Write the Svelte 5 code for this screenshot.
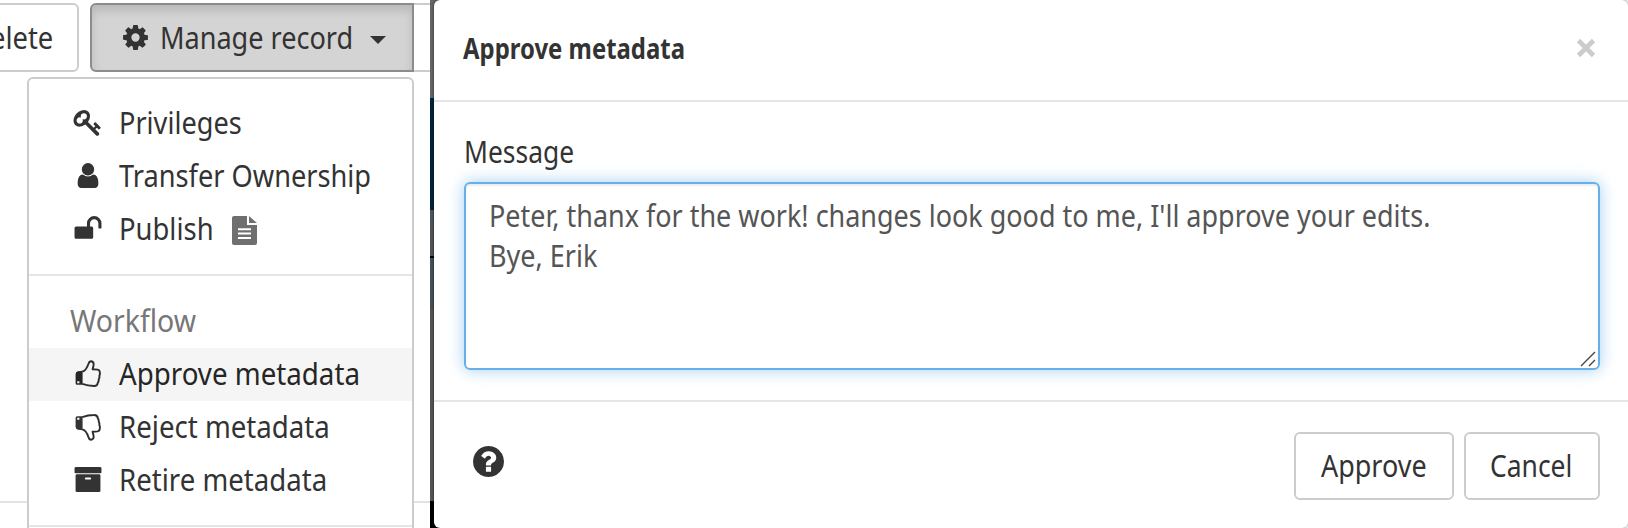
<script>
  const icons = {
    cog: ['0 0 1792 1792', 'M1152 896q0-106-75-181t-181-75-181 75-75 181 75 181 181 75 181-75 75-181zm512-109v222q0 12-8 23t-20 13l-185 28q-19 54-39 91 35 50 107 138 10 12 10 25t-9 23q-27 37-99 108t-94 71q-12 0-26-9l-138-108q-44 23-91 38-16 136-29 186-7 28-36 28h-222q-14 0-24.5-8.5t-11.5-21.5l-28-184q-49-16-90-37l-141 107q-10 9-25 9-14 0-25-11-126-114-165-168-7-10-7-23 0-12 8-23 15-21 51-66.5t54-70.5q-27-50-41-99l-183-27q-13-2-21-12.5t-8-23.5v-222q0-12 8-23t19-13l186-28q14-46 39-92-40-57-107-138-10-12-10-24 0-10 9-23 26-36 98.5-107.5t94.5-71.5q13 0 26 10l138 107q44-23 91-38 16-136 29-186 7-28 36-28h222q14 0 24.5 8.5t11.5 21.5l28 184q49 16 90 37l142-107q9-9 24-9 13 0 25 10 129 119 165 170 7 8 7 22 0 12-8 23-15 21-51 66.5t-54 70.5q26 50 41 98l183 28q13 2 21 12.5t8 23.5z'],
    key: ['0 0 1792 1792', 'M832 512q0-80-56-136t-136-56-136 56-56 136q0 42 19 83-41-19-83-19-80 0-136 56t-56 136 56 136 136 56 136-56 56-136q0-42-19-83 41 19 83 19 80 0 136-56t56-136zm851 704q0 17-49 66t-66 49q-9 0-28.5-16t-36.5-33-38.5-40-24.5-26l-96 96 220 220q28 28 28 68 0 42-39 81t-81 39q-40 0-68-28l-671-671q-176 131-365 131-163 0-265.5-102.5t-102.5-265.5q0-160 95-313t248-248 313-95q163 0 265.5 102.5t102.5 265.5q0 189-131 365l355 355 96-96q-3-3-26-24.5t-40-38.5-33-36.5-16-28.5q0-17 49-66t66-49q13 0 23 10 6 6 46 44.5t82 79.5 86.5 86 73 78 28.5 41z'],
    user: ['0 0 1792 1792', 'M1536 1399q0 109-62.5 187t-150.5 78h-854q-88 0-150.5-78t-62.5-187q0-85 8.5-160.5t31.5-152 58.5-131 94-89 134.5-34.5q131 128 313 128t313-128q76 0 134.5 34.5t94 89 58.5 131 31.5 152 8.5 160.5zm-256-887q0 159-112.5 271.5t-271.5 112.5-271.5-112.5-112.5-271.5 112.5-271.5 271.5-112.5 271.5 112.5 112.5 271.5z'],
    unlock: ['0 0 1792 1792', 'M1728 576v256q0 26-19 45t-45 19h-64q-26 0-45-19t-19-45v-256q0-106-75-181t-181-75-181 75-75 181v192h96q40 0 68 28t28 68v576q0 40-28 68t-68 28h-960q-40 0-68-28t-28-68v-576q0-40 28-68t68-28h672v-192q0-185 131.5-316.5t316.5-131.5 316.5 131.5 131.5 316.5z'],
    archive: ['0 0 1792 1792', 'M1088 832q0-26-19-45t-45-19h-256q-26 0-45 19t-19 45 19 45 45 19h256q26 0 45-19t19-45zm576-192v960q0 26-19 45t-45 19h-1408q-26 0-45-19t-19-45v-960q0-26 19-45t45-19h1408q26 0 45 19t19 45zm64-448v256q0 26-19 45t-45 19h-1536q-26 0-45-19t-19-45v-256q0-26 19-45t45-19h1536q26 0 45 19t19 45z'],
    help: ['128 128 1536 1536', 'M1024 1376v-192q0-14-9-23t-23-9h-192q-14 0-23 9t-9 23v192q0 14 9 23t23 9h192q14 0 23-9t9-23zm256-672q0-88-55.5-163t-138.5-116-170-41q-243 0-371 213-15 24 8 42l132 100q7 6 19 6 16 0 25-12 53-68 86-92 34-24 86-24 48 0 85.5 26t37.5 59q0 38-20 61t-68 45q-63 28-115.5 86.5t-52.5 125.5v36q0 14 9 23t23 9h192q14 0 23-9t9-23q0-19 21.5-49.5t54.5-49.5q32-18 49-28.5t46-35 44.5-48 28-60.5 12.5-81zm384 192q0 209-103 385.5t-279.5 279.5-385.5 103-385.5-103-279.5-279.5-103-385.5 103-385.5 279.5-279.5 385.5-103 385.5 103 279.5 279.5 103 385.5z'],
    file: ['0 0 25 29', 'M2 0H15V9H25V27Q25 29 23 29H2Q0 29 0 27V2Q0 0 2 0ZM17 0L25 7H17ZM6 12.2V14.2H19V12.2ZM6 16.5V18.5H19V16.5ZM6 20.9V22.9H19V20.9Z']
  };

  const record = [
    { label: 'Privileges', width: 123, icon: 'key' },
    { label: 'Transfer Ownership', width: 252, icon: 'user' },
    { label: 'Publish', width: 95, icon: 'unlock', badge: true }
  ];
  const workflow = [
    { label: 'Approve metadata', width: 241, thumb: 'up', active: true },
    { label: 'Reject metadata', width: 211, thumb: 'down' },
    { label: 'Retire metadata', width: 208, icon: 'archive' }
  ];

  // Condenses a label horizontally so that it fills the given width.
  function fit(node, width) {
    node.style.transform = `scaleX(${width / node.offsetWidth})`;
  }
</script>

{#snippet icon(name, cls)}
  <svg class={cls} viewBox={icons[name][0]} aria-hidden="true"><path fill-rule="evenodd" d={icons[name][1]} /></svg>
{/snippet}

{#snippet text(label, width)}
  <span class="text" style:width="{width}px"><span use:fit={width}>{label}</span></span>
{/snippet}

{#snippet row(item)}
  <li class="row" class:active={item.active}>
    {#if item.thumb}
      <svg class="thumb {item.thumb}" viewBox="0 0 27 27" aria-hidden="true">
        <path fill-rule="evenodd" d="M3 11.3L7.6 10.8V24.8H2.2Q.6 24.8 .6 23.2V14Q.8 11.6 3 11.3ZM2.2 21.2V23.2H4.4V21.2Z" />
        <path class="hand" d="M7.3 11.6C11 11 12.2 7.6 13.5 3.8Q14.3 1.2 16.3 1.3Q19 1.8 18.6 5L17.6 9.3L22.6 9.6Q25.1 10.2 24.7 12.4Q25.4 14.2 24.3 15.8Q24.8 17.8 23.7 19.4Q23.9 21.2 22.9 22.6Q22.4 26.1 19 26Q12.8 26 7.3 23.9" />
      </svg>
    {:else}
      {@render icon(item.icon, 'icon')}
    {/if}
    {@render text(item.label, item.width)}
    {#if item.badge}{@render icon('file', 'file')}{/if}
  </li>
{/snippet}

<div class="screen">
  <section class="page">
    <div class="toolbar">
      <button class="btn delete">{@render text('Delete', 83)}</button>
      <button class="btn manage">
        {@render icon('cog', 'cog')}
        {@render text('Manage record', 193)}
        <span class="caret"></span>
      </button>
      <div class="next"></div>
    </div>
    <ul class="menu">
      {#each record as item}{@render row(item)}{/each}
      <li class="divider"></li>
      <li class="heading">{@render text('Workflow', 126)}</li>
      {#each workflow as item}{@render row(item)}{/each}
      <li class="divider"></li>
    </ul>
  </section>
  <div class="backdrop">
    <i class="b1"></i><i class="b2"></i><i class="b3"></i><i class="b4"></i><i class="b5"></i><i class="b6"></i>
  </div>
  <section class="modal">
    <header>
      <h4>{@render text('Approve metadata', 222)}</h4>
      <svg class="close" viewBox="0 0 20 20"><path d="M2.5 2.5L17.5 17.5M17.5 2.5L2.5 17.5" /></svg>
    </header>
    <div class="body">
      <div class="label">{@render text('Message', 110)}</div>
      <div class="area">
        <div>{@render text("Peter, thanx for the work! changes look good to me, I'll approve your edits.", 941)}</div>
        <div>{@render text('Bye, Erik', 108)}</div>
        <svg class="grip" viewBox="0 0 16 16"><path d="M1 15L15 1M9 15L15 9" /></svg>
      </div>
    </div>
    <footer>
      {@render icon('help', 'help')}
      <button class="btn">{@render text('Approve', 106)}</button>
      <button class="btn cancel">{@render text('Cancel', 82)}</button>
    </footer>
  </section>
</div>

<style>
  :global(body) { margin: 0; background: #fff; }
  .screen { display: flex; width: 1628px; height: 528px; overflow: hidden; font: 30px/40px "Noto Sans", sans-serif; color: #333; fill: #333; }
  .text { display: inline-block; white-space: nowrap; flex: none; text-align: left; }
  .text > span { display: inline-block; transform-origin: 0 50%; }
  svg { display: block; flex: none; }

  .page { width: 430px; height: 528px; flex: none; overflow: hidden; background: linear-gradient(#e3e3e3, #e3e3e3) 0 501px / 100% 2px no-repeat; }
  .toolbar { display: flex; height: 69px; padding-top: 3px; margin-left: -57px; }
  .btn { box-sizing: border-box; display: flex; align-items: center; height: 68px; padding: 0 25px; border: 2px solid #ccc; border-radius: 6px; background: #fff; font: inherit; color: #333; }
  .toolbar .btn { height: 69px; }
  .delete { width: 136px; margin-right: 11px; }
  .manage { width: 324px; padding: 0 0 0 30px; border-color: #8c8c8c; border-radius: 6px 0 0 6px; background: #d4d4d4; box-shadow: inset 0 6px 10px rgba(0, 0, 0, .125); }
  .cog { width: 29px; height: 29px; margin: 0 10px 0 -1px; }
  .caret { margin: 4px 0 0 17px; border: 8px solid transparent; border-top-color: #333; border-bottom: 0; }
  .next { flex: 1; height: 65px; border: solid #ccc; border-width: 2px 0; }

  .menu { box-sizing: border-box; width: 387px; height: 470px; margin: 5px 0 0 27px; padding: 18px 0 0; border: 2px solid #ccc; border-radius: 6px; background: #fff; list-style: none; }
  .row, .heading { box-sizing: border-box; display: flex; align-items: center; height: 53px; padding: 0 0 2px 44px; }
  .row.active { background: #f5f5f5; color: #262626; fill: #262626; }
  .heading { padding-left: 41px; color: #777; }
  .divider { height: 2px; margin: 18px 0 19px; background: #e5e5e5; }
  .icon { width: 30px; height: 29px; margin-right: 16px; }
  .thumb { width: 27px; height: 27px; margin: 0 17px 1px 2px; }
  .hand { fill: none; stroke: #2d2d2d; stroke-width: 1.9; stroke-linejoin: round; }
  .down { margin: 2px 17px 0 2px; transform: scaleY(-1); }
  .file { width: 25px; height: 29px; margin: 3px 0 0 18px; fill: #6f6f6f; }

  .backdrop { display: flex; flex-direction: column; flex: none; width: 12px; margin-right: -8px; }
  .backdrop i { display: block; }
  .b1 { height: 98px; background: #666; }
  .b2 { height: 112px; background: #00263a; }
  .b3 { height: 46px; background: #50565a; }
  .b4 { height: 2px; background: #000; }
  .b5 { height: 52px; background: #465158; }
  .b6 { flex: 1; background: linear-gradient(#555 191px, #000 191px); }

  .modal { position: relative; box-sizing: border-box; width: 1194px; height: 528px; flex: none; border-radius: 6px; background: #fff; box-shadow: 0 0 3px rgba(0, 0, 0, .6); }
  header { box-sizing: border-box; display: flex; align-items: center; justify-content: space-between; height: 102px; padding: 0 32px 5px 29px; border-bottom: 2px solid #e5e5e5; }
  h4 { margin: 0; font-size: 28px; font-weight: 700; }
  .close { width: 20px; height: 20px; fill: none; stroke: #ccc; stroke-width: 4.6; }
  .body { box-sizing: border-box; height: 298px; padding: 30px 28px 0 30px; }
  .label { height: 50px; }
  .area { position: relative; box-sizing: border-box; height: 188px; padding: 12px 23px; border: 2px solid #66afe9; border-radius: 6px; color: #555; box-shadow: inset 0 2px 2px rgba(0, 0, 0, .075), 0 0 16px rgba(102, 175, 233, .6); }
  .area > div { height: 40px; }
  .grip { position: absolute; right: 2px; bottom: 1px; width: 16px; height: 16px; stroke: #444; stroke-width: 1.4; }
  footer { display: flex; gap: 10px; height: 96px; padding: 30px 28px 0 39px; border-top: 2px solid #e5e5e5; box-sizing: border-box; }
  .cancel { padding: 0 26px 0 24px; }
  .help { width: 31px; height: 31px; margin: 14px auto 0 0; }
</style>
